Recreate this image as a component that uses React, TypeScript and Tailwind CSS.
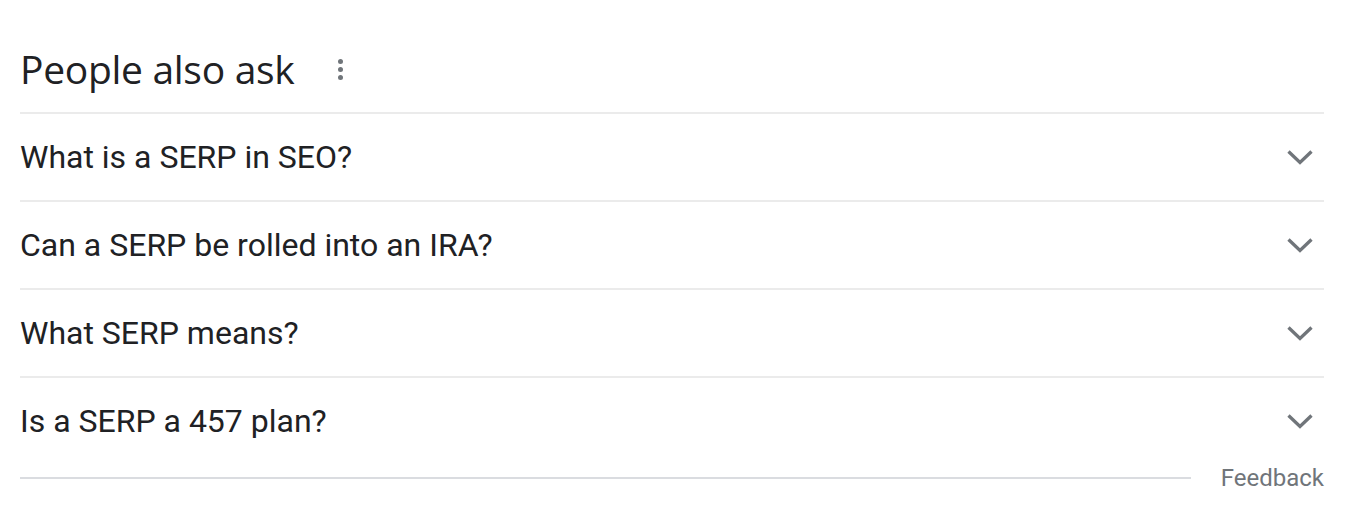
import React from "react";

const questions = [
  "What is a SERP in SEO?",
  "Can a SERP be rolled into an IRA?",
  "What SERP means?",
  "Is a SERP a 457 plan?",
];

const Chevron = () => (
  <svg width="26" height="16" viewBox="0 0 26 16" className="text-[#70757a]">
    <path
      d="M1.5 2.5l11.5 11 11.5-11"
      fill="none"
      stroke="currentColor"
      strokeWidth="3.3"
    />
  </svg>
);

const App: React.FC = () => {
  return (
    <div
      className="bg-white w-[1358px] h-[512px] pl-[20px] pr-[34px] text-[#202124]"
      style={{ fontFamily: "Roboto, Arial, sans-serif" }}
    >
      {/* Header */}
      <div className="h-[112px] pt-[24px] flex items-center">
        <div className="text-[39px] leading-none tracking-[-0.3px]" style={{ fontFamily: "'Open Sans', Roboto, sans-serif" }}>
          People also ask
        </div>
        <div className="ml-[43px] flex flex-col gap-[3px] pt-[2px]">
          <span className="block w-[5px] h-[5px] rounded-full bg-[#70757a]" />
          <span className="block w-[5px] h-[5px] rounded-full bg-[#70757a]" />
          <span className="block w-[5px] h-[5px] rounded-full bg-[#70757a]" />
        </div>
      </div>

      {/* Questions */}
      {questions.map((q) => (
        <div
          key={q}
          className="h-[88px] border-t-2 border-[#ebebeb] flex items-center justify-between"
        >
          <div className="text-[32px] leading-none">{q}</div>
          <div className="mr-[11px]">
            <Chevron />
          </div>
        </div>
      ))}

      {/* Footer */}
      <div className="h-[28px] flex items-center">
        <div className="flex-1 border-t-2 border-[#dadce0]" />
        <div className="ml-[30px] text-[24px] text-[#70757a] leading-none">
          Feedback
        </div>
      </div>
    </div>
  );
};

export default App;
